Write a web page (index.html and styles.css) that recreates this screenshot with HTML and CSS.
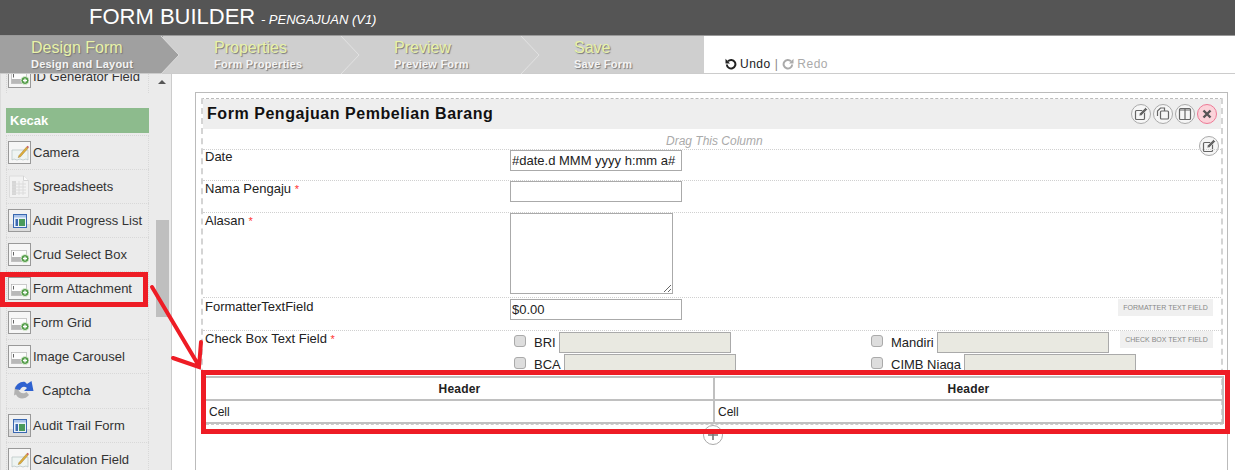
FILE: index.html
```html
<!DOCTYPE html>
<html lang="en">
<head>
    <meta charset="UTF-8">
    <meta name="viewport" content="width=device-width, initial-scale=1.0">
    <title>Form Builder</title>
    <link rel="stylesheet" href="styles.css">
</head>
<body>
    <svg class="sprites" width="0" height="0">
        <symbol id="ic-field" viewBox="0 0 21 21">
            <rect x="0" y="0" width="21" height="21" fill="#f6f6f6"/>
            <rect x="2.500" y="6.500" width="15" height="11" fill="#fdfdfd" stroke="#aaa" stroke-width="0.6"/>
            <rect x="2.500" y="13" width="15" height="4.500" fill="#b8b8b8"/>
            <path d="M4.500 8v3.500" stroke="#666" stroke-width="1"/>
            <circle cx="16" cy="14.500" r="4" fill="#4f9a45" stroke="#e8f4e0" stroke-width="0.8"/>
            <path d="M14 14.500h4M16 12.500v4" stroke="#fff" stroke-width="1.300"/>
        </symbol>
        <symbol id="ic-pencil" viewBox="0 0 21 21">
            <rect x="0" y="0" width="21" height="21" fill="#f6f6f6"/>
            <path d="M3 8h16v10l-2-1-3 1-3-1-3 1-3-1-2 1z" fill="#eef4f2" stroke="#b4c2c2" stroke-width="0.7"/>
            <path d="M10 13.500l7.500-8.500 1.500 1.300-7.500 8.500-2.300.8z" fill="#e0ae3a" stroke="#8a6a20" stroke-width="0.4"/>
            <path d="M17.500 5l1.500 1.300 1-1.200-1.500-1.300z" fill="#c85a5a"/>
        </symbol>
        <symbol id="ic-sheet" viewBox="0 0 23 23">
            <path d="M1.500 1h14l5 4.500v17H1.500z" fill="#f2f2f2" stroke="#dcdcdc"/>
            <path d="M15.500 1v4.500h5" fill="#fafafa" stroke="#d4d4d4"/>
            <rect x="4" y="6" width="4" height="14" fill="#d6d6d6"/>
            <path d="M4 9h14M4 12h14M4 15h14M4 18h14M11 6v14M15 6v14" stroke="#dcdcdc" stroke-width="1" fill="none"/>
        </symbol>
        <symbol id="ic-window" viewBox="0 0 21 21">
            <rect x="0" y="0" width="21" height="21" fill="#f2f2f2"/>
            <rect x="0" y="14" width="21" height="7" fill="#dcdcdc"/>
            <rect x="4.500" y="4.500" width="13" height="13" fill="#eaf1fb" stroke="#3a68b0"/>
            <rect x="5" y="5" width="12" height="2.500" fill="#a9c3ea"/>
            <rect x="6.500" y="9" width="2.500" height="7" fill="#3a68b0"/>
            <rect x="10" y="9" width="6" height="7" fill="#4a9a5a"/>
        </symbol>
        <symbol id="ic-captcha" viewBox="0 0 20 19">
            <path d="M1 5L4 8C6 13 10 13 12.500 11L15 14C11 19 4 18.500 2 13.500L0 14.500z" fill="#b2b2b2"/>
            <path d="M1 8C2 3 7 0 11 1L13 3L17.500 0L19.500 10L10 10L13 7C10 4.500 7 6 6 9z" fill="#2f62d0"/>
        </symbol>
        <symbol id="ic-edit" viewBox="0 0 20 20">
            <rect x="4.500" y="6.500" width="9" height="9" rx="1" fill="none" stroke="#666" stroke-width="1.200"/>
            <path d="M8 12l.5-2.500 6-6 2 2-6 6z" fill="#666" stroke="#f6f6f6" stroke-width="0.6"/>
        </symbol>
    </svg>

    <header class="title-bar">
        <span class="title-main">FORM BUILDER</span>
        <span class="title-sub">- PENGAJUAN (V1)</span>
    </header>

    <nav class="steps-bar">
        <div class="steps">
            <div class="step step-active">
                <div class="step-name">Design Form</div>
                <div class="step-desc">Design and Layout</div>
                <svg class="step-arrow" width="20" height="38" viewBox="0 0 20 38">
                    <path d="M0 0L18 19L0 38z" fill="#a0a0a0"/>
                    <path d="M0 0L18 19L0 38" fill="none" stroke="#dcdcdc" stroke-width="1"/>
                </svg>
            </div>
            <div class="step">
                <div class="step-name">Properties</div>
                <div class="step-desc">Form Properties</div>
                <svg class="step-arrow" width="20" height="38" viewBox="0 0 20 38">
                    <path d="M0 0L18 19L0 38" fill="none" stroke="#e2e2e2" stroke-width="1"/>
                </svg>
            </div>
            <div class="step">
                <div class="step-name">Preview</div>
                <div class="step-desc">Preview Form</div>
                <svg class="step-arrow" width="20" height="38" viewBox="0 0 20 38">
                    <path d="M0 0L18 19L0 38" fill="none" stroke="#e2e2e2" stroke-width="1"/>
                </svg>
            </div>
            <div class="step">
                <div class="step-name">Save</div>
                <div class="step-desc">Save Form</div>
            </div>
        </div>
        <div class="history">
            <svg width="12" height="12" viewBox="0 0 12 12"><path d="M3 3.200a4.300 4.300 0 1 1-1.200 3.300" fill="none" stroke="#222" stroke-width="2"/><path d="M.5 .8v4.600H5z" fill="#222"/></svg>
            <span class="history-on">Undo</span>
            <span class="history-sep">|</span>
            <svg width="12" height="12" viewBox="0 0 12 12"><path d="M9 3.200a4.300 4.300 0 1 0 1.200 3.300" fill="none" stroke="#aaa" stroke-width="2"/><path d="M11.500 .8v4.600H7z" fill="#aaa"/></svg>
            <span class="history-off">Redo</span>
        </div>
    </nav>

    <div class="workspace">
        <aside class="palette">
            <div class="palette-list">
                <div class="palette-item"><svg class="icon-box"><use href="#ic-field"/></svg>ID Generator Field</div>
                <div class="palette-head">Kecak</div>
                <div class="palette-item"><svg class="icon-box"><use href="#ic-pencil"/></svg>Camera</div>
                <div class="palette-item"><svg class="icon-plain"><use href="#ic-sheet"/></svg>Spreadsheets</div>
                <div class="palette-item"><svg class="icon-box"><use href="#ic-window"/></svg>Audit Progress List</div>
                <div class="palette-item"><svg class="icon-box"><use href="#ic-field"/></svg>Crud Select Box</div>
                <div class="palette-item"><svg class="icon-box"><use href="#ic-field"/></svg>Form Attachment</div>
                <div class="palette-item"><svg class="icon-box"><use href="#ic-field"/></svg>Form Grid</div>
                <div class="palette-item"><svg class="icon-box"><use href="#ic-field"/></svg>Image Carousel</div>
                <div class="palette-item item-captcha"><svg class="icon-captcha"><use href="#ic-captcha"/></svg>Captcha</div>
                <div class="palette-item"><svg class="icon-box"><use href="#ic-window"/></svg>Audit Trail Form</div>
                <div class="palette-item"><svg class="icon-box"><use href="#ic-pencil"/></svg>Calculation Field</div>
            </div>
            <div class="scroll-track">
                <div class="scroll-up"></div>
                <div class="scroll-thumb"></div>
            </div>
        </aside>

        <main class="canvas">
            <div class="form-box">
                <div class="form-col">
                    <div class="form-head">
                        <h2 class="form-title">Form Pengajuan Pembelian Barang</h2>
                        <div class="form-actions">
                            <span class="round-btn"><svg width="20" height="20"><use href="#ic-edit"/></svg></span>
                            <span class="round-btn">
                                <svg width="20" height="20" viewBox="0 0 20 20"><rect x="7.500" y="7" width="8" height="8" rx="1" fill="#f6f6f6" stroke="#666" stroke-width="1.200"/><path d="M4.500 12V7l3-3h4v3" fill="none" stroke="#666" stroke-width="1.200"/></svg>
                            </span>
                            <span class="round-btn">
                                <svg width="20" height="20" viewBox="0 0 20 20"><rect x="4.500" y="4.500" width="11" height="11" rx="1" fill="none" stroke="#666" stroke-width="1.200"/><path d="M10 4.500v11M4.500 6h11" stroke="#666" stroke-width="1.200"/></svg>
                            </span>
                            <span class="round-btn round-del">
                                <svg width="20" height="20" viewBox="0 0 20 20"><path d="M6.500 6.500l7 7M13.500 6.500l-7 7" stroke="#555" stroke-width="2.400"/></svg>
                            </span>
                        </div>
                    </div>
                    <div class="drag-hint">Drag This Column</div>
                    <span class="round-btn col-edit"><svg width="20" height="20"><use href="#ic-edit"/></svg></span>

                    <div class="field-row row-31">
                        <div class="field-label">Date</div>
                        <input class="text-input" type="text" value="#date.d MMM yyyy h:mm a#">
                    </div>
                    <div class="field-row row-32">
                        <div class="field-label">Nama Pengaju <span class="req">*</span></div>
                        <input class="text-input" type="text">
                    </div>
                    <div class="field-row row-85">
                        <div class="field-label">Alasan <span class="req">*</span></div>
                        <textarea class="text-area"></textarea>
                    </div>
                    <div class="field-row row-33">
                        <div class="field-label">FormatterTextField</div>
                        <input class="text-input" type="text" value="$0.00">
                        <span class="type-badge badge-fmt">FORMATTER TEXT FIELD</span>
                    </div>
                    <div class="field-row row-check">
                        <div class="field-label">Check Box Text Field <span class="req">*</span></div>
                        <div class="check-grid">
                            <label class="check-opt"><span class="check-box"></span>BRI<input class="opt-input" type="text" disabled></label>
                            <label class="check-opt"><span class="check-box"></span>Mandiri<input class="opt-input" type="text" disabled></label>
                            <label class="check-opt"><span class="check-box"></span>BCA<input class="opt-input" type="text" disabled></label>
                            <label class="check-opt"><span class="check-box"></span>CIMB Niaga<input class="opt-input" type="text" disabled></label>
                        </div>
                        <span class="type-badge badge-check">CHECK BOX TEXT FIELD</span>
                    </div>

                    <table class="grid-table">
                        <tr><th>Header</th><th>Header</th></tr>
                        <tr><td>Cell</td><td>Cell</td></tr>
                    </table>
                </div>
            </div>
        </main>
    </div>

    <span class="add-btn">
        <svg width="20" height="20" viewBox="0 0 20 20"><path d="M10 5v10M5 10h10" stroke="#777" stroke-width="1.600"/></svg>
    </span>

    <!-- red annotations drawn on top of the screenshot -->
    <svg class="markup" width="1235" height="470" viewBox="0 0 1235 470">
        <rect x="2.500" y="274.500" width="143" height="30" fill="none" stroke="#ee1c25" stroke-width="5"/>
        <rect x="203.500" y="372.500" width="1024" height="59" fill="none" stroke="#ee1c25" stroke-width="5"/>
        <path d="M152 287L199 366M173 358L199 367L201 342" fill="none" stroke="#ee1c25" stroke-width="4" stroke-linecap="round"/>
    </svg>
</body>
</html>
```

FILE: styles.css
```css
* {
    box-sizing: border-box;
}
body {
    margin: 0;
    width: 1235px;
    height: 470px;
    overflow: hidden;
    position: relative;
    font-family: 'Liberation Sans', Arial, sans-serif;
    font-size: 13px;
    color: #222;
    background-color: #fff;
}
.sprites {
    position: absolute;
}

/* top bar */
.title-bar {
    height: 36px;
    padding-left: 89px;
    background-color: #555;
    border-bottom: 1px solid #999;
    color: #fff;
    white-space: nowrap;
    line-height: 33px;
}
.title-main {
    font-size: 22px;
}
.title-sub {
    font-size: 13px;
    font-style: italic;
    margin-left: 2px;
}

/* steps */
.steps-bar {
    display: flex;
    height: 38px;
    border-bottom: 1px solid #ccc;
}
.steps {
    display: flex;
    width: 704px;
    background-color: #cfcfcf;
}
.step {
    position: relative;
    width: 180px;
    padding: 3px 0 0 51px;
}
.step-active {
    width: 163px;
    padding-left: 31px;
    background-color: #a0a0a0;
}
.step-name {
    font-size: 16px;
    line-height: 18px;
    color: #e8f2a8;
    text-shadow: 1px 1px 1px #777;
}
.step-desc {
    font-size: 11px;
    font-weight: bold;
    line-height: 14px;
    letter-spacing: 0.22px;
    color: #f4f4f4;
    text-shadow: 1px 1px 1px #777;
}
.step-arrow {
    position: absolute;
    top: 0;
    right: -18px;
    z-index: 1;
}
.history {
    display: flex;
    align-items: center;
    gap: 3px;
    padding: 18px 0 0 21px;
    font-size: 12px;
    letter-spacing: 0.5px;
}
.history-on {
    color: #222;
}
.history-sep {
    color: #888;
    margin: 0 1px;
}
.history-off {
    color: #aaa;
}

/* left palette */
.workspace {
    display: flex;
    height: 396px;
}
.palette {
    display: flex;
    flex: none;
    width: 172px;
    overflow: hidden;
    background-color: #ebebeb;
    border-left: 1px solid #ddd;
    border-right: 1px solid #ccc;
}
.palette-list {
    flex: none;
    width: 148px;
    margin-top: -15px;
    padding-left: 5px;
}
.palette-item {
    display: flex;
    align-items: center;
    width: 143px;
    height: 34px;
    padding-left: 1px;
    color: #333;
    border: 1px dotted #d8d8d8;
    border-bottom: 0;
}
.item-captcha {
    height: 35px;
    padding-bottom: 2px;
}
.palette-head {
    height: 25px;
    margin: 15px 0 2px;
    padding-left: 4px;
    line-height: 25px;
    font-weight: bold;
    color: #fff;
    background-color: #8dbb8d;
}
.icon-box {
    flex: none;
    width: 23px;
    height: 23px;
    margin-right: 2px;
    border: 1px solid #999;
}
.icon-plain {
    flex: none;
    width: 23px;
    height: 23px;
    margin-right: 2px;
}
.icon-captcha {
    flex: none;
    width: 20px;
    height: 19px;
    margin: 0 8px 0 6px;
}
.scroll-track {
    width: 13px;
    margin-left: 7px;
}
.scroll-up {
    width: 0;
    margin: 6px 0 0 2px;
    border: 4px solid transparent;
    border-top: 0;
    border-bottom: 4px solid #555;
}
.scroll-thumb {
    height: 97px;
    margin-top: 136px;
    background-color: #bfbfbf;
}

/* form canvas */
.canvas {
    flex: 1;
    min-width: 0;
    padding: 18px 7px 0 23px;
}
.form-box {
    height: 400px;
    padding: 5px 4px 0 5px;
    border: 1px solid #bbb;
    border-width: 1px 1px 0 1px;
}
.form-col {
    position: relative;
    height: 327px;
    border: 2px dashed #d4d4d4;
    border-top: 1px dashed #bbb;
    border-bottom: 1px dashed #ccc;
}
.form-head {
    display: flex;
    align-items: center;
    justify-content: space-between;
    height: 30px;
    padding: 0 4px 0 4px;
    background-color: #eee;
}
.form-title {
    margin: 0;
    font-size: 16px;
    letter-spacing: 0.55px;
    color: #111;
}
.form-actions {
    display: flex;
    gap: 2px;
}
.round-btn {
    display: block;
    width: 20px;
    height: 20px;
    border: 1px solid #aaa;
    border-radius: 50%;
    background-color: #f6f6f6;
}
.round-btn svg {
    display: block;
    margin: -1px;
}
.round-del {
    border-color: #ee7a96;
    background-color: #fbd3da;
}
.col-edit {
    position: absolute;
    top: 37px;
    right: 2px;
}
.drag-hint {
    height: 20px;
    padding-left: 463px;
    line-height: 25px;
    font-size: 12px;
    font-style: italic;
    color: #aaa;
}
.field-row {
    position: relative;
    display: flex;
    align-items: flex-start;
    padding-left: 2px;
    border-top: 1px dotted #d0d0d0;
}
.row-31 { height: 31px; }
.row-31 .field-label { padding-top: 0; }
.row-32 { height: 32px; }
.row-85 { height: 85px; }
.row-33 { height: 33px; padding-top: 1px; }
.row-check {
    height: 46px;
    overflow: hidden;
}
.field-label {
    flex: none;
    width: 305px;
    padding-top: 1px;
    line-height: 14px;
    color: #222;
}
.req {
    font-size: 11px;
    color: #f33;
}
.text-input {
    width: 172px;
    height: 21px;
    padding: 1px;
    border: 1px solid #aaa;
    font-family: 'Liberation Sans', Arial, sans-serif;
    font-size: 13px;
    color: #222;
}
.text-area {
    width: 163px;
    height: 81px;
    border: 1px solid #aaa;
}
.type-badge {
    position: absolute;
    right: 8px;
    height: 17px;
    line-height: 17px;
    text-align: center;
    font-size: 7px;
    color: #888;
    background-color: #f0f0f0;
}
.badge-fmt {
    top: 1px;
    width: 95px;
}
.badge-check {
    top: 0;
    width: 93px;
}
.check-grid {
    display: grid;
    grid-template-columns: 357px auto;
    grid-auto-rows: 22px;
}
.check-opt {
    display: flex;
    align-items: center;
    padding-left: 4px;
    font-size: 13px;
}
.check-box {
    flex: none;
    width: 12px;
    height: 12px;
    margin: -2px 8px 0 0;
    border: 1px solid #aaa;
    border-radius: 3px;
    background-color: #ddd;
}
.opt-input {
    width: 172px;
    height: 21px;
    margin-left: 3px;
    border: 1px solid #aaa;
    background-color: #e9e9e1;
}
.grid-table {
    width: 1020px;
    margin-left: 1px;
    border-collapse: collapse;
    table-layout: fixed;
}
.grid-table th,
.grid-table td {
    height: 23px;
    padding: 0 3px;
    border: 2px solid #c0c0c0;
    font-size: 12px;
    color: #222;
}
.grid-table th {
    letter-spacing: 0.2px;
}
.grid-table td {
    text-align: left;
}
.add-btn {
    position: absolute;
    left: 703px;
    top: 425px;
    width: 20px;
    height: 20px;
    border: 1px solid #aaa;
    border-radius: 50%;
    background-color: #fff;
}
.add-btn svg {
    display: block;
    margin: -1px;
}
.markup {
    position: absolute;
    left: 0;
    top: 0;
}
```
